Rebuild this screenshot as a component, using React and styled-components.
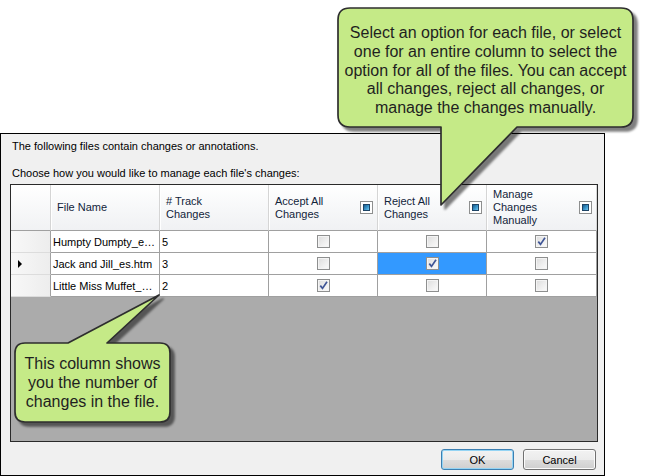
import styled, { createGlobalStyle } from 'styled-components';

const GlobalStyle = createGlobalStyle`
  html, body {
    margin: 0;
    padding: 0;
    background: #ffffff;
  }
  body {
    font-family: "Liberation Sans", Arial, sans-serif;
  }
`;

const rows = [
  { name: 'Humpty Dumpty_e…', count: 5, accept: false, reject: false, manage: true },
  { name: 'Jack and Jill_es.htm', count: 3, accept: false, reject: true, manage: false, current: true },
  { name: 'Little Miss Muffet_…', count: 2, accept: true, reject: false, manage: false },
];

function Check({ checked }) {
  return (
    <Box>
      {checked && (
        <svg width="9" height="9" viewBox="0 0 9 9">
          <path d="M1.3 4.6 L3.5 7.4 L8 0.8" fill="none" stroke="#3f5596" strokeWidth="1.7" />
        </svg>
      )}
    </Box>
  );
}

function Callout({ left, top, width, height, path, pad, children }) {
  const m = 90;
  return (
    <CalloutBox $left={left} $top={top} $width={width} $height={height}>
      <CalloutShape
        $m={m}
        width={width + m * 2}
        height={height + m * 2}
        viewBox={`${-m} ${-m} ${width + m * 2} ${height + m * 2}`}
      >
        <path d={path} fill="#c5ea87" stroke="#2e2e2e" strokeWidth="1.7" strokeLinejoin="round" />
      </CalloutShape>
      <CalloutText $pad={pad}>{children}</CalloutText>
    </CalloutBox>
  );
}

export default function App() {
  return (
    <>
      <GlobalStyle />
      <Screen>
        <Dialog>
          <Message $gap={5}>The following files contain changes or annotations.</Message>
          <Message $gap={12}>Choose how you would like to manage each file's changes:</Message>
          <Table>
            <Corner />
            <HeadCell>File Name</HeadCell>
            <HeadCell>
              # Track
              <br />
              Changes
            </HeadCell>
            <HeadCell>
              <span>
                Accept All
                <br />
                Changes
              </span>
              <HeadCheck>
                <i />
              </HeadCheck>
            </HeadCell>
            <HeadCell>
              <span>
                Reject All
                <br />
                Changes
              </span>
              <HeadCheck>
                <i />
              </HeadCheck>
            </HeadCell>
            <HeadCell>
              <span>
                Manage
                <br />
                Changes
                <br />
                Manually
              </span>
              <HeadCheck>
                <i />
              </HeadCheck>
            </HeadCell>

            {rows.map((r) => (
              <Row key={r.name}>
                <RowHead>{r.current && <Arrow />}</RowHead>
                <TextCell>{r.name}</TextCell>
                <TextCell>{r.count}</TextCell>
                <CheckCell>
                  <Check checked={r.accept} />
                </CheckCell>
                <CheckCell $selected={r.current}>
                  <Check checked={r.reject} />
                </CheckCell>
                <CheckCell>
                  <Check checked={r.manage} />
                </CheckCell>
              </Row>
            ))}
          </Table>
          <Buttons>
            <Button $default>OK</Button>
            <Button>Cancel</Button>
          </Buttons>
        </Dialog>

        <Callout
          left={338}
          top={8}
          width={295}
          height={119}
          pad={16}
          path="M12 0 H283 Q295 0 295 12 V107 Q295 119 283 119 H179 L103 197 V119 H12 Q0 119 0 107 V12 Q0 0 12 0 Z"
        >
          Select an option for each file, or select
          <br />
          one for an entire column to select the
          <br />
          option for all of the files. You can accept
          <br />
          all changes, reject all changes, or
          <br />
          manage the changes manually.
        </Callout>

        <Callout
          left={15}
          top={343}
          width={155}
          height={79}
          pad={12}
          path="M10 0 H53 L144 -48 L92 0 H145 Q155 0 155 10 V69 Q155 79 145 79 H10 Q0 79 0 69 V10 Q0 0 10 0 Z"
        >
          This column shows
          <br />
          you the number of
          <br />
          changes in the file.
        </Callout>
      </Screen>
    </>
  );
}

const Screen = styled.div`
  position: relative;
  width: 647px;
  height: 476px;
  overflow: hidden;
  padding-top: 133px;
  box-sizing: border-box;
`;

const Dialog = styled.div`
  width: 605px;
  height: 343px;
  box-sizing: border-box;
  border: 1px solid #000;
  background: #f0f0f0;
  padding: 0 6px 0 9px;
  display: flex;
  flex-direction: column;
  font-size: 11px;
  color: #000;
`;

const Message = styled.div`
  margin-top: ${(p) => p.$gap}px;
  padding-left: 2px;
  height: 15px;
  line-height: 15px;
  white-space: nowrap;
`;

const Table = styled.div`
  margin-top: 3px;
  height: 258px;
  box-sizing: border-box;
  border: 1px solid #2a2a2a;
  background: #ababab;
  display: grid;
  grid-template-columns: 40px repeat(4, 109px) 110px;
  grid-template-rows: 46px repeat(3, 22px);
  align-content: start;
`;

const Cell = styled.div`
  box-sizing: border-box;
  border-right: 1px solid #a0a0a0;
  border-bottom: 1px solid #a0a0a0;
  display: flex;
  align-items: center;
  white-space: nowrap;
  overflow: hidden;
`;

const Corner = styled(Cell)`
  background: linear-gradient(to bottom, #ffffff, #f1f2f4);
  border-right-color: #d5d5d5;
`;

const HeadCell = styled(Cell)`
  background: linear-gradient(to bottom, #ffffff 0%, #f7f8f9 50%, #f0f1f3 100%);
  border-right-color: #d5d5d5;
  box-shadow: inset 1px 0 0 #ffffff;
  justify-content: space-between;
  padding: 0 4px 0 6px;
  line-height: 13px;
  color: #12243a;
`;

const HeadCheck = styled.span`
  width: 13px;
  height: 13px;
  box-sizing: border-box;
  border: 1px solid #8e8f8f;
  background: #fff;
  padding: 2px;
  flex-shrink: 0;

  i {
    display: block;
    width: 100%;
    height: 100%;
    box-sizing: border-box;
    border: 1px solid #1d4466;
    background: linear-gradient(135deg, #1a5d8e 0%, #3f9bd0 60%, #74c6ec 100%);
  }
`;

const Row = styled.div`
  display: contents;
`;

const RowHead = styled(Cell)`
  background: linear-gradient(to right, #f8f8f8, #ededed);
  border-bottom-color: #dcdcdc;
  padding-left: 7px;
`;

const Arrow = styled.span`
  width: 0;
  height: 0;
  border-left: 4px solid #000;
  border-top: 4px solid transparent;
  border-bottom: 4px solid transparent;
`;

const TextCell = styled(Cell)`
  background: #fff;
  padding-left: 2px;
`;

const CheckCell = styled(Cell)`
  background: ${(p) => (p.$selected ? '#3399ff' : '#fff')};
  justify-content: center;
`;

const Box = styled.span`
  width: 13px;
  height: 13px;
  box-sizing: border-box;
  border: 1px solid #8e8f8f;
  background: linear-gradient(135deg, #dcdcdc 0%, #f0f0f0 60%, #fbfbfb 100%);
  box-shadow: inset 0 0 0 1px #f4f4f4;
  display: flex;
  align-items: center;
  justify-content: center;
`;

const Buttons = styled.div`
  margin-top: 7px;
  display: flex;
  justify-content: flex-end;
  gap: 9px;
  padding-right: 2px;
`;

const Button = styled.div`
  width: 73px;
  height: 21px;
  box-sizing: border-box;
  border: 1px solid ${(p) => (p.$default ? '#3c7fb1' : '#707070')};
  border-radius: 3px;
  background: linear-gradient(to bottom, #f2f2f2 0%, #ebebeb 50%, #dddddd 51%, #cfcfcf 100%);
  box-shadow: inset 0 0 0 1px ${(p) => (p.$default ? '#94d4f4' : '#fbfbfb')};
  display: flex;
  align-items: center;
  justify-content: center;
  font-size: 11px;
  color: #000;
`;

const CalloutBox = styled.div`
  position: absolute;
  left: ${(p) => p.$left}px;
  top: ${(p) => p.$top}px;
  width: ${(p) => p.$width}px;
  height: ${(p) => p.$height}px;
  z-index: 2;
`;

const CalloutShape = styled.svg`
  position: absolute;
  left: ${(p) => -p.$m}px;
  top: ${(p) => -p.$m}px;
  filter: drop-shadow(4px 4px 1px rgba(0, 0, 0, 0.5));
`;

const CalloutText = styled.div`
  position: relative;
  padding-top: ${(p) => p.$pad}px;
  text-align: center;
  font-size: 16px;
  line-height: 18.8px;
  color: #1f1f1f;
  white-space: nowrap;
`;
